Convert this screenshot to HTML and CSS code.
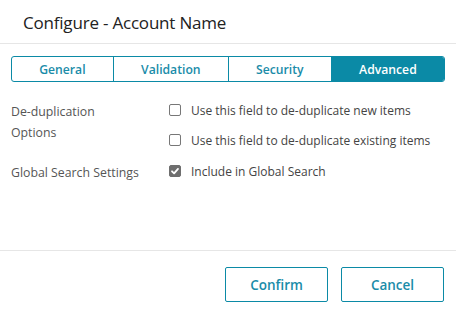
FILE: index.html
```html
<!DOCTYPE html>
<html>
<head>
<meta charset="utf-8">
<link rel="stylesheet" href="styles.css">
</head>
<body>
<div class="dialog">
  <div class="header"><h1 class="title">Configure - Account Name</h1></div>
  <div class="content">
    <div class="tabs">
      <div class="tab">General</div>
      <div class="tab">Validation</div>
      <div class="tab">Security</div>
      <div class="tab active">Advanced</div>
    </div>
    <div class="form">
      <div class="row">
        <div class="label">De-duplication<br>Options</div>
        <div class="options">
          <label class="check"><span class="box"></span><span>Use this field to de-duplicate new items</span></label>
          <label class="check"><span class="box"></span><span>Use this field to de-duplicate existing items</span></label>
        </div>
      </div>
      <div class="row">
        <div class="label">Global Search Settings</div>
        <div class="options">
          <label class="check"><span class="box checked"><svg viewBox="0 0 12 12" width="12" height="12"><path d="M3 6.3 L5.1 8.4 L9 3.9" fill="none" stroke="#fff" stroke-width="1.8" stroke-linecap="round" stroke-linejoin="round"/></svg></span><span>Include in Global Search</span></label>
        </div>
      </div>
    </div>
  </div>
  <div class="footer">
    <button class="btn">Confirm</button>
    <button class="btn">Cancel</button>
  </div>
</div>
</body>
</html>
```

FILE: styles.css
```css
html, body { margin: 0; padding: 0; background: #fff; }
body { font-family: "Open Sans", "Liberation Sans", sans-serif; color: #444; }
.dialog { height: 100vh; display: flex; flex-direction: column; }
.header { height: 44px; border-bottom: 1px solid #e6e6e6; display: flex; align-items: center; padding: 0 23px; box-sizing: border-box; }
.title { margin: 0; font-size: 17px; letter-spacing: -0.2px; font-weight: 400; color: #222; line-height: 24px; padding-top: 2px; }
.content { padding: 12px 11px 0; }
.tabs { display: flex; border: 1px solid #0b8aa6; border-radius: 3px; height: 26px; box-sizing: border-box; overflow: hidden; }
.tab { flex: 1 1 auto; display: flex; align-items: center; justify-content: center; font-size: 12.2px; font-weight: 600; color: #1a8ca9; border-left: 1px solid #0b8aa6; }
.tab:first-child { border-left: none; }
.tab.active { background: #0b8aa6; color: #fff; }
.form { padding-top: 18px; display: flex; flex-direction: column; gap: 11px; }
.row { display: flex; }
.label { width: 158px; flex: none; font-size: 12.3px; line-height: 21px; padding-top: 1px; color: #555; }
.options { display: flex; flex-direction: column; gap: 10px; }
.check { display: flex; align-items: center; height: 20px; font-size: 12px; color: #444; }
.box { width: 12px; height: 12px; border: 1px solid #777; border-radius: 2px; margin-right: 10px; box-sizing: border-box; flex: none; display: flex; }
.box.checked { background: #6e6e6e; border-color: #6e6e6e; }
.box svg { margin: -1px; }
.footer { margin-top: auto; border-top: 1px solid #e6e6e6; padding: 16px 12px 17px; display: flex; justify-content: flex-end; gap: 13px; }
.btn { width: 103px; height: 35px; background: #fff; border: 1.5px solid #0b8aa6; border-radius: 2px; font-family: "Open Sans", "Liberation Sans", sans-serif; font-size: 13.5px; font-weight: 600; color: #1a8ca9; padding: 0; }
```
